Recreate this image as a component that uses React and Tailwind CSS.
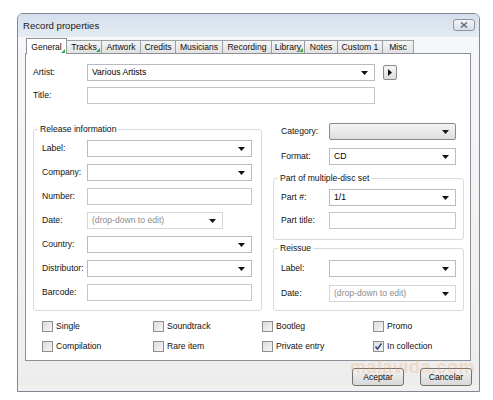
import React from "react";

const Arrow = () => (
  <svg width="7" height="4" viewBox="0 0 7 4" className="shrink-0">
    <path d="M0 0h7L3.5 4z" fill="#111" />
  </svg>
);

function Combo({ className = "", text = "", gray = false, button = false }) {
  let cls =
    "flex h-[17px] items-center justify-between pl-[4px] pr-[6px] ";
  if (button)
    cls +=
      "rounded-[2px] border border-[#8a8a8a] bg-gradient-to-b from-[#f4f4f4] to-[#dedede] ";
  else if (gray) cls += "border border-[#d6d6d6] bg-white ";
  else cls += "border border-[#b8bcc2] bg-white ";
  return (
    <div className={cls + className}>
      <span className={gray ? "text-[#8d8d8d]" : "text-black"}>{text}</span>
      <Arrow />
    </div>
  );
}

function Input({ className = "" }) {
  return <div className={"h-[17px] border border-[#c3c7cc] bg-white " + className} />;
}

function Row({ label, labelW, children, className = "" }) {
  return (
    <div className={"flex items-center " + className}>
      <div className={labelW}>{label}</div>
      {children}
    </div>
  );
}

function Check({ label, checked }) {
  return (
    <div className="flex h-[11px] items-center">
      <div className="flex h-[11px] w-[11px] items-center justify-center border border-[#8f8f8f] bg-gradient-to-br from-[#dcdcdc] to-[#f6f6f6]">
        {checked && (
          <svg width="9" height="9" viewBox="0 0 9 9">
            <path d="M1.5 4.5l2 2.5 4-5.5" stroke="#2b4a7a" strokeWidth="1.5" fill="none" />
          </svg>
        )}
      </div>
      <span className="ml-[3px]">{label}</span>
    </div>
  );
}

const tabs = [
  ["General", 41, true, true],
  ["Tracks", 36, false, true],
  ["Artwork", 40, false, false],
  ["Credits", 36, false, false],
  ["Musicians", 48, false, false],
  ["Recording", 50, false, false],
  ["Library", 34, false, true],
  ["Notes", 34, false, false],
  ["Custom 1", 46, false, false],
  ["Misc", 32, false, false],
];

const Mark = () => (
  <svg width="4" height="4" viewBox="0 0 4 4" className="absolute bottom-[1px] right-[1px]">
    <path d="M4 0v4H0z" fill="#3aa84a" />
  </svg>
);

export default function App() {
  return (
    <div className="relative h-[400px] w-[493px] overflow-hidden bg-white pl-[17px] pt-[13px] font-['Liberation_Sans',Arial,sans-serif] text-[8.6px] leading-none text-[#111]">
      <div className="h-[379px] w-[463px] rounded-t-[6px] border border-[#7f8893] bg-[#f0f0f0]">
        {/* title bar */}
        <div className="flex h-[23px] items-center justify-between rounded-t-[5px] bg-gradient-to-b from-[#d5e0ed] to-[#e4ebf3] pl-[5px] pr-[4px]">
          <span className="text-[9.6px] text-[#1c1c1c]">Record properties</span>
          <div className="mb-[1px] flex h-[12px] w-[22px] items-center justify-center rounded-[3px] border border-[#8e959e] bg-gradient-to-b from-[#f2f4f7] to-[#d9dfe6]">
            <svg width="8" height="6" viewBox="0 0 8 6">
              <path d="M1 0.5l6 5M7 0.5l-6 5" stroke="#6c727a" strokeWidth="1.6" />
            </svg>
          </div>
        </div>
        {/* body */}
        <div className="bg-gradient-to-b from-[#f6f7f9] to-[#ededed] pl-[7px] pt-[1px]">
          {/* tabs */}
          <div className="relative z-10 ml-[1px] flex h-[15px] items-end">
            {tabs.map(([t, w, sel, mark]) =>
              sel ? (
                <div
                  key={t}
                  style={{ width: w }}
                  className="relative -mb-[1px] flex h-[16px] items-start justify-center border border-b-0 border-[#8c9098] bg-white pt-[4px]"
                >
                  {t}
                  {mark && <Mark />}
                </div>
              ) : (
                <div
                  key={t}
                  style={{ width: w }}
                  className="relative -ml-[1px] flex h-[13px] items-center justify-center border border-b-0 border-[#9a9ea5] bg-gradient-to-b from-[#f5f5f5] to-[#e1e1e1] first:ml-0"
                >
                  {t}
                  {mark && <Mark />}
                </div>
              )
            )}
          </div>
          {/* panel */}
          <div className="h-[308px] w-[446px] border border-[#8c9098] bg-white pl-[7px] pt-[10px]">
            <Row label="Artist:" labelW="w-[54px]">
              <Combo className="w-[288px]" text="Various Artists" />
              <div className="ml-[8px] flex h-[15px] w-[14px] items-center justify-center rounded-[2px] border border-[#8a8a8a] bg-gradient-to-b from-[#f7f7f7] to-[#dcdcdc]">
                <svg width="4" height="7" viewBox="0 0 4 7">
                  <path d="M0 0l4 3.5L0 7z" fill="#111" />
                </svg>
              </div>
            </Row>
            <Row label="Title:" labelW="w-[54px]" className="mt-[6px]">
              <Input className="h-[16px] w-[288px]" />
            </Row>

            <div className="mt-[19px] flex">
              {/* left */}
              <fieldset className="mt-[1px] h-[187px] w-[229px] rounded-[3px] border border-[#d5dbe0] px-[8px]">
                <legend className="-ml-[4px] px-[2px] leading-[11px]">Release information</legend>
                <div className="mt-[5px] flex flex-col gap-[7px]">
                  <Row label="Label:" labelW="w-[45px]"><Combo className="w-[165px]" /></Row>
                  <Row label="Company:" labelW="w-[45px]"><Combo className="w-[165px]" /></Row>
                  <Row label="Number:" labelW="w-[45px]"><Input className="w-[165px]" /></Row>
                  <Row label="Date:" labelW="w-[45px]"><Combo className="w-[136px]" gray text="(drop-down to edit)" /></Row>
                  <Row label="Country:" labelW="w-[45px]"><Combo className="w-[165px]" /></Row>
                  <Row label="Distributor:" labelW="w-[45px]"><Combo className="w-[165px]" /></Row>
                  <Row label="Barcode:" labelW="w-[45px]"><Input className="w-[165px]" /></Row>
                </div>
              </fieldset>
              {/* right */}
              <div className="ml-[11px] w-[191px]">
                <Row label="Category:" labelW="w-[48px]" className="pl-[8px]">
                  <Combo className="w-[127px]" button />
                </Row>
                <Row label="Format:" labelW="w-[48px]" className="mt-[8px] pl-[8px]">
                  <Combo className="w-[127px]" text="CD" />
                </Row>
                <fieldset className="mt-[8px] h-[67px] w-[191px] rounded-[3px] border border-[#d5dbe0] pl-[7px]">
                  <legend className="-ml-[3px] px-[2px] leading-[11px]">Part of multiple-disc set</legend>
                  <div className="mt-[5px] flex flex-col gap-[6px]">
                    <Row label="Part #:" labelW="w-[48px]"><Combo className="w-[127px]" text="1/1" /></Row>
                    <Row label="Part title:" labelW="w-[48px]"><Input className="w-[127px]" /></Row>
                  </div>
                </fieldset>
                <fieldset className="mt-[3px] h-[68px] w-[191px] rounded-[3px] border border-[#d5dbe0] pl-[7px]">
                  <legend className="-ml-[3px] px-[2px] leading-[11px]">Reissue</legend>
                  <div className="mt-[6px] flex flex-col gap-[8px]">
                    <Row label="Label:" labelW="w-[48px]"><Combo className="w-[127px]" /></Row>
                    <Row label="Date:" labelW="w-[48px]"><Combo className="w-[127px]" gray text="(drop-down to edit)" /></Row>
                  </div>
                </fieldset>
              </div>
            </div>

            {/* checkboxes */}
            <div className="mt-[10px] grid grid-cols-[111px_109px_111px_100px] gap-y-[9px] pl-[9px]">
              <Check label="Single" />
              <Check label="Soundtrack" />
              <Check label="Bootleg" />
              <Check label="Promo" />
              <Check label="Compilation" />
              <Check label="Rare item" />
              <Check label="Private entry" />
              <Check label="In collection" checked />
            </div>
          </div>
          {/* buttons */}
          <div className="mt-[7px] flex justify-end gap-[16px] pr-[7px]">
            <div className="flex h-[18px] w-[52px] items-center justify-center rounded-[3px] border border-[#707070] bg-gradient-to-b from-[#f3f3f3] to-[#d8d8d8]">
              Aceptar
            </div>
            <div className="flex h-[18px] w-[52px] items-center justify-center rounded-[3px] border border-[#707070] bg-gradient-to-b from-[#f3f3f3] to-[#d8d8d8]">
              Cancelar
            </div>
          </div>
        </div>
      </div>
      {/* watermark */}
      <div className="pointer-events-none absolute left-[350px] top-[358px] text-[18px] font-bold tracking-[0.5px] text-[#f0a060] opacity-25">
        malavida.com
      </div>
    </div>
  );
}
